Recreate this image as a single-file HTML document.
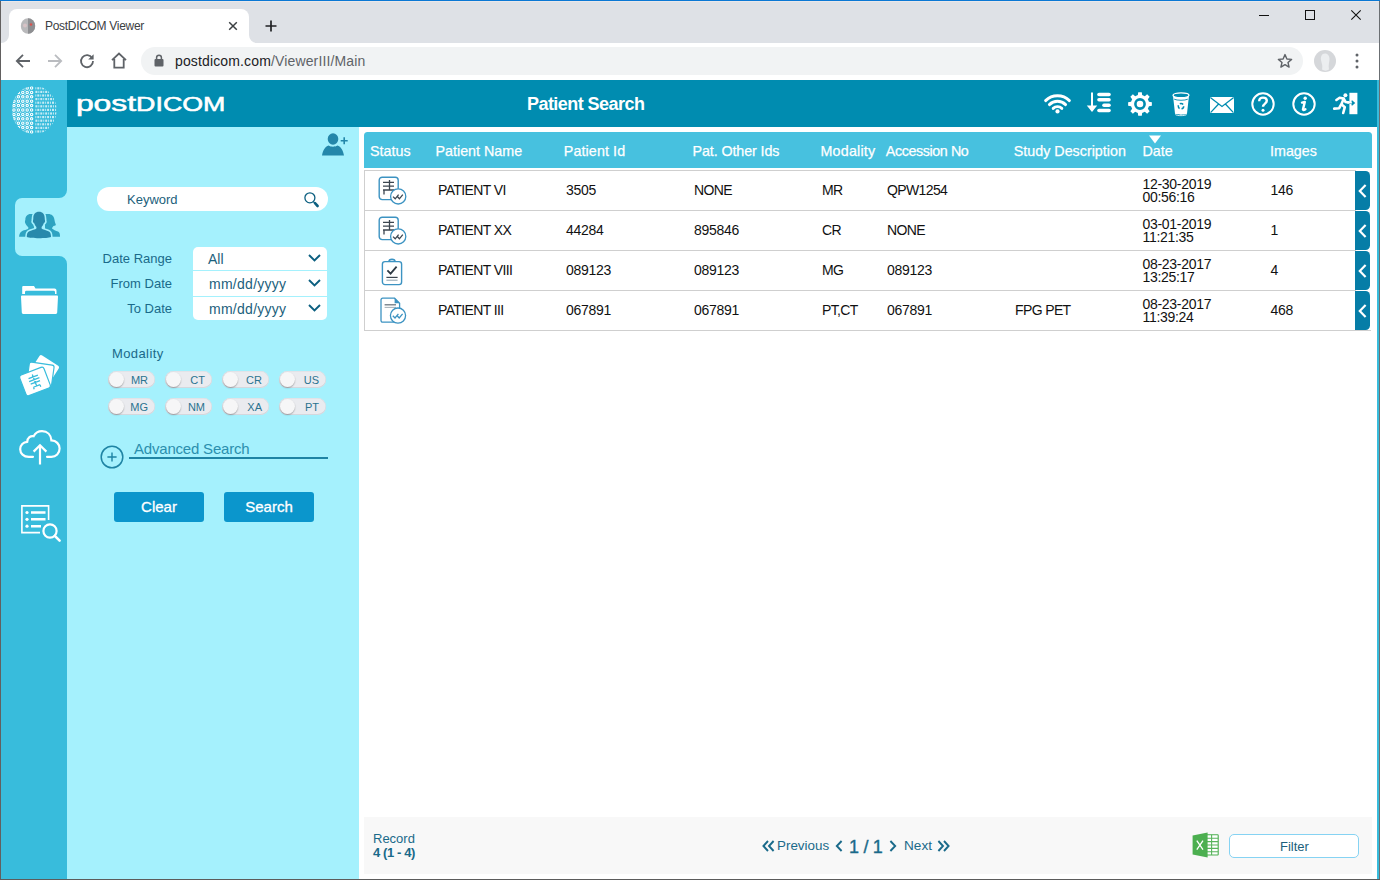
<!DOCTYPE html>
<html lang="en">
<head>
<meta charset="utf-8">
<title>PostDICOM Viewer</title>
<style>
html,body{margin:0;padding:0;}
body{width:1380px;height:880px;overflow:hidden;position:relative;background:#fff;font-family:"Liberation Sans",sans-serif;}
.a{position:absolute;}
.t{position:absolute;white-space:nowrap;line-height:1;}
svg{display:block;overflow:visible;}
/* browser chrome */
#tabbar{left:0;top:0;width:1380px;height:43px;background:#dee1e6;}
#topline{left:0;top:0;width:1380px;height:1px;background:#0a78d4;box-shadow:0 1px 0 #eae8ea;}
#tab{left:9px;top:9px;width:240px;height:34px;background:#fff;border-radius:8px 8px 0 0;}
#toolbar{left:0;top:43px;width:1380px;height:37px;background:#fff;}
#omni{left:141px;top:47px;width:1162px;height:28px;border-radius:14px;background:#f1f3f4;}
/* app */
#hdr{left:67px;top:80px;width:1310px;height:47px;background:#008cb0;}
#side{left:1px;top:80px;width:66px;height:799px;background:#38bcdc;}
#rstrip{left:1377px;top:80px;width:2px;height:799px;background:#38bcdc;}
#panel{left:67px;top:127px;width:292px;height:752px;background:#a5f1fd;}
#lborder{left:0;top:1px;width:1px;height:879px;background:#626060;}
#rborder{left:1379px;top:1px;width:1px;height:879px;background:#6b6f73;}
#bborder{left:0;top:879px;width:1380px;height:1px;background:#5c5c5c;}
.lbl{color:#1a6a8a;font-size:13px;}
.sel{left:193px;width:134px;height:24px;background:#fff;}
.tog{width:47px;height:17px;border-radius:8.5px;background:#eaebef;box-shadow:inset 0 -1px 0 0 #d4d7dd, inset 0 0 0 0.6px #d9dce2;}
.tog i{position:absolute;left:0.5px;top:0.5px;width:15px;height:15px;border-radius:8px;background:#f6f6f7;box-shadow:0 1px 1.5px rgba(0,0,0,.3);}
.tog b{position:absolute;right:7px;top:3.5px;font-weight:normal;font-size:11px;line-height:11px;color:#2a7390;}
.btn{width:90px;height:30px;border-radius:3px;background:#0b96cc;color:#fff;font-size:15px;text-align:center;line-height:30px;-webkit-text-stroke:0.3px #fff;}
/* table */
#thead{left:364px;top:132px;width:1008px;height:36px;background:#47c1df;border-radius:3.5px 3.5px 0 0;}
.th{color:#fff;font-size:14.3px;top:143.5px;-webkit-text-stroke:0.25px #fff;}
.row{left:364px;width:991px;height:39px;border-top:1px solid #cfcfcf;border-left:1px solid #cfcfcf;background:#fff;}
.rb{left:1355px;width:15px;height:38.5px;background:#067da7;border-radius:0 4.5px 4.5px 0;}
.td{color:#111;font-size:14px;letter-spacing:-0.3px;}
.cap{letter-spacing:-0.62px;}
#foot{left:364px;top:817px;width:1008px;height:57px;background:#f8f8f8;}
.pg{color:#1a6a8a;font-size:14px;}
</style>
</head>
<body>
<!-- BROWSER CHROME -->
<div class="a" id="tabbar"></div>
<div class="a" id="topline"></div>
<div class="a" id="tab"></div>
<div class="a" id="toolbar"></div>
<div class="a" id="omni"></div>
<!--CHROME-ICONS-START-->
<!-- tab flares -->
<svg class="a" style="left:1px;top:35px" width="8" height="8"><path d="M0 8 A8 8 0 0 0 8 0 V8Z" fill="#fff"/></svg>
<svg class="a" style="left:249px;top:35px" width="8" height="8"><path d="M8 8 A8 8 0 0 1 0 0 V8Z" fill="#fff"/></svg>
<!-- favicon -->
<svg class="a" style="left:20px;top:18px" width="16" height="16" viewBox="0 0 16 16"><ellipse cx="8" cy="8" rx="7.2" ry="7.8" fill="#b9b9bb"/><path d="M8 0.2 A7.2 7.8 0 0 1 8 15.8Z" fill="#8e8f92"/><circle cx="11" cy="6.5" r="1.3" fill="#d9534f"/><circle cx="5" cy="7.5" r="2" fill="#d7c3c6"/></svg>
<span class="t" id="tabtitle" style="left:45px;top:20px;font-size:12px;color:#3c4043;letter-spacing:-0.3px">PostDICOM Viewer</span>
<svg class="a" style="left:228px;top:21px" width="10" height="10" viewBox="0 0 10 10"><path d="M1.2 1.2 L8.8 8.8 M8.8 1.2 L1.2 8.8" stroke="#3c4043" stroke-width="1.5" fill="none"/></svg>
<svg class="a" style="left:265px;top:20px" width="12" height="12" viewBox="0 0 12 12"><path d="M6 0.5 V11.5 M0.5 6 H11.5" stroke="#202124" stroke-width="1.7" fill="none"/></svg>
<!-- window controls -->
<svg class="a" style="left:1259px;top:10px" width="10" height="10" viewBox="0 0 10 10"><path d="M0 5.5 H10" stroke="#111" stroke-width="1" fill="none"/></svg>
<svg class="a" style="left:1305px;top:10px" width="10" height="10" viewBox="0 0 10 10"><rect x="0.5" y="0.5" width="9" height="9" stroke="#111" stroke-width="1" fill="none"/></svg>
<svg class="a" style="left:1351px;top:10px" width="10" height="10" viewBox="0 0 10 10"><path d="M0.3 0.3 L9.7 9.7 M9.7 0.3 L0.3 9.7" stroke="#111" stroke-width="1.1" fill="none"/></svg>
<!-- nav icons -->
<svg class="a" style="left:15px;top:53px" width="16" height="16" viewBox="0 0 16 16"><path d="M15 8 H2.5 M8 1.8 L1.8 8 L8 14.2" stroke="#5f6368" stroke-width="1.8" fill="none"/></svg>
<svg class="a" style="left:47px;top:53px" width="16" height="16" viewBox="0 0 16 16"><path d="M1 8 H13.5 M8 1.8 L14.2 8 L8 14.2" stroke="#babcc0" stroke-width="1.8" fill="none"/></svg>
<svg class="a" style="left:79px;top:53px" width="16" height="16" viewBox="0 0 16 16"><path d="M13.2 5.2 A6 6 0 1 0 14 8" stroke="#5f6368" stroke-width="1.8" fill="none"/><path d="M14.6 1.2 V6.6 H9.2Z" fill="#5f6368"/></svg>
<svg class="a" style="left:111px;top:52px" width="16" height="17" viewBox="0 0 16 17"><path d="M1 8.2 L8 1.6 L15 8.2 M3.3 7 V15.6 H12.7 V7" stroke="#5f6368" stroke-width="1.8" fill="none" stroke-linejoin="miter"/></svg>
<!-- lock -->
<svg class="a" style="left:154px;top:54px" width="10" height="13" viewBox="0 0 10 13"><rect x="0.5" y="5" width="9" height="7.5" rx="1" fill="#5f6368"/><path d="M2.6 5.5 V3.6 A2.4 2.4 0 0 1 7.4 3.6 V5.5" stroke="#5f6368" stroke-width="1.5" fill="none"/></svg>
<span class="t" id="url" style="left:175px;top:54px;font-size:14px;color:#202124;letter-spacing:0.14px">postdicom.com<span style="color:#5f6368">/ViewerIII/Main</span></span>
<!-- star -->
<svg class="a" style="left:1277px;top:53px" width="16" height="16" viewBox="0 0 16 16"><path d="M8 1.6 L9.9 6 L14.6 6.4 L11 9.5 L12.1 14.1 L8 11.6 L3.9 14.1 L5 9.5 L1.4 6.4 L6.1 6Z" stroke="#5f6368" stroke-width="1.4" fill="none" stroke-linejoin="round"/></svg>
<!-- avatar -->
<svg class="a" style="left:1314px;top:50px" width="22" height="22" viewBox="0 0 22 22"><circle cx="11" cy="11" r="11" fill="#d5d7da"/><path d="M11 3.5 C7.5 3.5 6.5 7 7 10 C7.4 13 9 15 8 19.5 C10 21 13 21 15 19.5 C14 15 15.5 12 15.5 9 C15.5 6 14 3.5 11 3.5Z" fill="#eceef0"/></svg>
<svg class="a" style="left:1355px;top:53px" width="4" height="16" viewBox="0 0 4 16"><circle cx="2" cy="2" r="1.5" fill="#5f6368"/><circle cx="2" cy="8" r="1.5" fill="#5f6368"/><circle cx="2" cy="14" r="1.5" fill="#5f6368"/></svg>
<!--CHROME-ICONS-END-->

<!-- APP -->
<div class="a" id="side"></div>
<div class="a" id="hdr"></div>
<div class="a" id="rstrip"></div>
<div class="a" id="panel"></div>
<!--SIDEBAR-START-->
<svg class="a" style="left:12px;top:86px" width="45" height="48" viewBox="0 0 45 48"><defs><clipPath id="lgL"><path d="M22 0 A22.2 24 0 0 0 22 48Z"/></clipPath><clipPath id="lgR"><path d="M22.8 0 A21.8 24 0 0 1 22.8 48Z"/></clipPath></defs><g clip-path="url(#lgL)"><g fill="none" stroke="#fff" stroke-width="1.1"><circle cx="19.60" cy="2.00" r="1.2"/><circle cx="15.20" cy="2.00" r="1.2"/><circle cx="10.80" cy="2.00" r="1.2"/><circle cx="6.40" cy="2.00" r="1.2"/><circle cx="2.00" cy="2.00" r="1.2"/><circle cx="19.60" cy="6.40" r="1.2"/><circle cx="15.20" cy="6.40" r="1.2"/><circle cx="10.80" cy="6.40" r="1.2"/><circle cx="6.40" cy="6.40" r="1.2"/><circle cx="2.00" cy="6.40" r="1.2"/><circle cx="19.60" cy="10.80" r="1.2"/><circle cx="15.20" cy="10.80" r="1.2"/><circle cx="10.80" cy="10.80" r="1.2"/><circle cx="6.40" cy="10.80" r="1.2"/><circle cx="2.00" cy="10.80" r="1.2"/><circle cx="19.60" cy="15.20" r="1.2"/><circle cx="15.20" cy="15.20" r="1.2"/><circle cx="10.80" cy="15.20" r="1.2"/><circle cx="6.40" cy="15.20" r="1.2"/><circle cx="2.00" cy="15.20" r="1.2"/><circle cx="19.60" cy="19.60" r="1.2"/><circle cx="15.20" cy="19.60" r="1.2"/><circle cx="10.80" cy="19.60" r="1.2"/><circle cx="6.40" cy="19.60" r="1.2"/><circle cx="2.00" cy="19.60" r="1.2"/><circle cx="19.60" cy="24.00" r="1.2"/><circle cx="15.20" cy="24.00" r="1.2"/><circle cx="10.80" cy="24.00" r="1.2"/><circle cx="6.40" cy="24.00" r="1.2"/><circle cx="2.00" cy="24.00" r="1.2"/><circle cx="19.60" cy="28.40" r="1.2"/><circle cx="15.20" cy="28.40" r="1.2"/><circle cx="10.80" cy="28.40" r="1.2"/><circle cx="6.40" cy="28.40" r="1.2"/><circle cx="2.00" cy="28.40" r="1.2"/><circle cx="19.60" cy="32.80" r="1.2"/><circle cx="15.20" cy="32.80" r="1.2"/><circle cx="10.80" cy="32.80" r="1.2"/><circle cx="6.40" cy="32.80" r="1.2"/><circle cx="2.00" cy="32.80" r="1.2"/><circle cx="19.60" cy="37.20" r="1.2"/><circle cx="15.20" cy="37.20" r="1.2"/><circle cx="10.80" cy="37.20" r="1.2"/><circle cx="6.40" cy="37.20" r="1.2"/><circle cx="2.00" cy="37.20" r="1.2"/><circle cx="19.60" cy="41.60" r="1.2"/><circle cx="15.20" cy="41.60" r="1.2"/><circle cx="10.80" cy="41.60" r="1.2"/><circle cx="6.40" cy="41.60" r="1.2"/><circle cx="2.00" cy="41.60" r="1.2"/><circle cx="19.60" cy="46.00" r="1.2"/><circle cx="15.20" cy="46.00" r="1.2"/><circle cx="10.80" cy="46.00" r="1.2"/><circle cx="6.40" cy="46.00" r="1.2"/><circle cx="2.00" cy="46.00" r="1.2"/></g><g fill="#fff" opacity="0.7"><circle cx="17.40" cy="4.20" r="0.75"/><circle cx="13.00" cy="4.20" r="0.75"/><circle cx="8.60" cy="4.20" r="0.75"/><circle cx="4.20" cy="4.20" r="0.75"/><circle cx="-0.20" cy="4.20" r="0.75"/><circle cx="17.40" cy="8.60" r="0.75"/><circle cx="13.00" cy="8.60" r="0.75"/><circle cx="8.60" cy="8.60" r="0.75"/><circle cx="4.20" cy="8.60" r="0.75"/><circle cx="-0.20" cy="8.60" r="0.75"/><circle cx="17.40" cy="13.00" r="0.75"/><circle cx="13.00" cy="13.00" r="0.75"/><circle cx="8.60" cy="13.00" r="0.75"/><circle cx="4.20" cy="13.00" r="0.75"/><circle cx="-0.20" cy="13.00" r="0.75"/><circle cx="17.40" cy="17.40" r="0.75"/><circle cx="13.00" cy="17.40" r="0.75"/><circle cx="8.60" cy="17.40" r="0.75"/><circle cx="4.20" cy="17.40" r="0.75"/><circle cx="-0.20" cy="17.40" r="0.75"/><circle cx="17.40" cy="21.80" r="0.75"/><circle cx="13.00" cy="21.80" r="0.75"/><circle cx="8.60" cy="21.80" r="0.75"/><circle cx="4.20" cy="21.80" r="0.75"/><circle cx="-0.20" cy="21.80" r="0.75"/><circle cx="17.40" cy="26.20" r="0.75"/><circle cx="13.00" cy="26.20" r="0.75"/><circle cx="8.60" cy="26.20" r="0.75"/><circle cx="4.20" cy="26.20" r="0.75"/><circle cx="-0.20" cy="26.20" r="0.75"/><circle cx="17.40" cy="30.60" r="0.75"/><circle cx="13.00" cy="30.60" r="0.75"/><circle cx="8.60" cy="30.60" r="0.75"/><circle cx="4.20" cy="30.60" r="0.75"/><circle cx="-0.20" cy="30.60" r="0.75"/><circle cx="17.40" cy="35.00" r="0.75"/><circle cx="13.00" cy="35.00" r="0.75"/><circle cx="8.60" cy="35.00" r="0.75"/><circle cx="4.20" cy="35.00" r="0.75"/><circle cx="-0.20" cy="35.00" r="0.75"/><circle cx="17.40" cy="39.40" r="0.75"/><circle cx="13.00" cy="39.40" r="0.75"/><circle cx="8.60" cy="39.40" r="0.75"/><circle cx="4.20" cy="39.40" r="0.75"/><circle cx="-0.20" cy="39.40" r="0.75"/><circle cx="17.40" cy="43.80" r="0.75"/><circle cx="13.00" cy="43.80" r="0.75"/><circle cx="8.60" cy="43.80" r="0.75"/><circle cx="4.20" cy="43.80" r="0.75"/><circle cx="-0.20" cy="43.80" r="0.75"/><circle cx="17.40" cy="48.20" r="0.75"/><circle cx="13.00" cy="48.20" r="0.75"/><circle cx="8.60" cy="48.20" r="0.75"/><circle cx="4.20" cy="48.20" r="0.75"/><circle cx="-0.20" cy="48.20" r="0.75"/></g></g><g clip-path="url(#lgR)" fill="#fff" opacity="0.72"><rect x="23.40" y="1.20" width="0.90" height="2.2"/><rect x="25.30" y="1.20" width="2.00" height="2.2"/><rect x="28.30" y="1.20" width="0.90" height="2.2"/><rect x="30.20" y="1.20" width="2.00" height="2.2"/><rect x="33.20" y="1.20" width="0.90" height="2.2"/><rect x="35.10" y="1.20" width="2.00" height="2.2"/><rect x="38.10" y="1.20" width="0.90" height="2.2"/><rect x="40.00" y="1.20" width="2.00" height="2.2"/><rect x="43.00" y="1.20" width="0.90" height="2.2"/><rect x="44.90" y="1.20" width="2.00" height="2.2"/><rect x="23.40" y="4.80" width="2.00" height="2.2"/><rect x="26.40" y="4.80" width="0.90" height="2.2"/><rect x="28.30" y="4.80" width="2.00" height="2.2"/><rect x="31.30" y="4.80" width="0.90" height="2.2"/><rect x="33.20" y="4.80" width="2.00" height="2.2"/><rect x="36.20" y="4.80" width="0.90" height="2.2"/><rect x="38.10" y="4.80" width="2.00" height="2.2"/><rect x="41.10" y="4.80" width="0.90" height="2.2"/><rect x="43.00" y="4.80" width="2.00" height="2.2"/><rect x="46.00" y="4.80" width="0.90" height="2.2"/><rect x="23.40" y="8.40" width="0.90" height="2.2"/><rect x="25.30" y="8.40" width="2.00" height="2.2"/><rect x="28.30" y="8.40" width="0.90" height="2.2"/><rect x="30.20" y="8.40" width="2.00" height="2.2"/><rect x="33.20" y="8.40" width="0.90" height="2.2"/><rect x="35.10" y="8.40" width="2.00" height="2.2"/><rect x="38.10" y="8.40" width="0.90" height="2.2"/><rect x="40.00" y="8.40" width="2.00" height="2.2"/><rect x="43.00" y="8.40" width="0.90" height="2.2"/><rect x="44.90" y="8.40" width="2.00" height="2.2"/><rect x="23.40" y="12.00" width="2.00" height="2.2"/><rect x="26.40" y="12.00" width="0.90" height="2.2"/><rect x="28.30" y="12.00" width="2.00" height="2.2"/><rect x="31.30" y="12.00" width="0.90" height="2.2"/><rect x="33.20" y="12.00" width="2.00" height="2.2"/><rect x="36.20" y="12.00" width="0.90" height="2.2"/><rect x="38.10" y="12.00" width="2.00" height="2.2"/><rect x="41.10" y="12.00" width="0.90" height="2.2"/><rect x="43.00" y="12.00" width="2.00" height="2.2"/><rect x="46.00" y="12.00" width="0.90" height="2.2"/><rect x="23.40" y="15.60" width="0.90" height="2.2"/><rect x="25.30" y="15.60" width="2.00" height="2.2"/><rect x="28.30" y="15.60" width="0.90" height="2.2"/><rect x="30.20" y="15.60" width="2.00" height="2.2"/><rect x="33.20" y="15.60" width="0.90" height="2.2"/><rect x="35.10" y="15.60" width="2.00" height="2.2"/><rect x="38.10" y="15.60" width="0.90" height="2.2"/><rect x="40.00" y="15.60" width="2.00" height="2.2"/><rect x="43.00" y="15.60" width="0.90" height="2.2"/><rect x="44.90" y="15.60" width="2.00" height="2.2"/><rect x="23.40" y="19.20" width="2.00" height="2.2"/><rect x="26.40" y="19.20" width="0.90" height="2.2"/><rect x="28.30" y="19.20" width="2.00" height="2.2"/><rect x="31.30" y="19.20" width="0.90" height="2.2"/><rect x="33.20" y="19.20" width="2.00" height="2.2"/><rect x="36.20" y="19.20" width="0.90" height="2.2"/><rect x="38.10" y="19.20" width="2.00" height="2.2"/><rect x="41.10" y="19.20" width="0.90" height="2.2"/><rect x="43.00" y="19.20" width="2.00" height="2.2"/><rect x="46.00" y="19.20" width="0.90" height="2.2"/><rect x="23.40" y="22.80" width="0.90" height="2.2"/><rect x="25.30" y="22.80" width="2.00" height="2.2"/><rect x="28.30" y="22.80" width="0.90" height="2.2"/><rect x="30.20" y="22.80" width="2.00" height="2.2"/><rect x="33.20" y="22.80" width="0.90" height="2.2"/><rect x="35.10" y="22.80" width="2.00" height="2.2"/><rect x="38.10" y="22.80" width="0.90" height="2.2"/><rect x="40.00" y="22.80" width="2.00" height="2.2"/><rect x="43.00" y="22.80" width="0.90" height="2.2"/><rect x="44.90" y="22.80" width="2.00" height="2.2"/><rect x="23.40" y="26.40" width="2.00" height="2.2"/><rect x="26.40" y="26.40" width="0.90" height="2.2"/><rect x="28.30" y="26.40" width="2.00" height="2.2"/><rect x="31.30" y="26.40" width="0.90" height="2.2"/><rect x="33.20" y="26.40" width="2.00" height="2.2"/><rect x="36.20" y="26.40" width="0.90" height="2.2"/><rect x="38.10" y="26.40" width="2.00" height="2.2"/><rect x="41.10" y="26.40" width="0.90" height="2.2"/><rect x="43.00" y="26.40" width="2.00" height="2.2"/><rect x="46.00" y="26.40" width="0.90" height="2.2"/><rect x="23.40" y="30.00" width="0.90" height="2.2"/><rect x="25.30" y="30.00" width="2.00" height="2.2"/><rect x="28.30" y="30.00" width="0.90" height="2.2"/><rect x="30.20" y="30.00" width="2.00" height="2.2"/><rect x="33.20" y="30.00" width="0.90" height="2.2"/><rect x="35.10" y="30.00" width="2.00" height="2.2"/><rect x="38.10" y="30.00" width="0.90" height="2.2"/><rect x="40.00" y="30.00" width="2.00" height="2.2"/><rect x="43.00" y="30.00" width="0.90" height="2.2"/><rect x="44.90" y="30.00" width="2.00" height="2.2"/><rect x="23.40" y="33.60" width="2.00" height="2.2"/><rect x="26.40" y="33.60" width="0.90" height="2.2"/><rect x="28.30" y="33.60" width="2.00" height="2.2"/><rect x="31.30" y="33.60" width="0.90" height="2.2"/><rect x="33.20" y="33.60" width="2.00" height="2.2"/><rect x="36.20" y="33.60" width="0.90" height="2.2"/><rect x="38.10" y="33.60" width="2.00" height="2.2"/><rect x="41.10" y="33.60" width="0.90" height="2.2"/><rect x="43.00" y="33.60" width="2.00" height="2.2"/><rect x="46.00" y="33.60" width="0.90" height="2.2"/><rect x="23.40" y="37.20" width="0.90" height="2.2"/><rect x="25.30" y="37.20" width="2.00" height="2.2"/><rect x="28.30" y="37.20" width="0.90" height="2.2"/><rect x="30.20" y="37.20" width="2.00" height="2.2"/><rect x="33.20" y="37.20" width="0.90" height="2.2"/><rect x="35.10" y="37.20" width="2.00" height="2.2"/><rect x="38.10" y="37.20" width="0.90" height="2.2"/><rect x="40.00" y="37.20" width="2.00" height="2.2"/><rect x="43.00" y="37.20" width="0.90" height="2.2"/><rect x="44.90" y="37.20" width="2.00" height="2.2"/><rect x="23.40" y="40.80" width="2.00" height="2.2"/><rect x="26.40" y="40.80" width="0.90" height="2.2"/><rect x="28.30" y="40.80" width="2.00" height="2.2"/><rect x="31.30" y="40.80" width="0.90" height="2.2"/><rect x="33.20" y="40.80" width="2.00" height="2.2"/><rect x="36.20" y="40.80" width="0.90" height="2.2"/><rect x="38.10" y="40.80" width="2.00" height="2.2"/><rect x="41.10" y="40.80" width="0.90" height="2.2"/><rect x="43.00" y="40.80" width="2.00" height="2.2"/><rect x="46.00" y="40.80" width="0.90" height="2.2"/><rect x="23.40" y="44.40" width="0.90" height="2.2"/><rect x="25.30" y="44.40" width="2.00" height="2.2"/><rect x="28.30" y="44.40" width="0.90" height="2.2"/><rect x="30.20" y="44.40" width="2.00" height="2.2"/><rect x="33.20" y="44.40" width="0.90" height="2.2"/><rect x="35.10" y="44.40" width="2.00" height="2.2"/><rect x="38.10" y="44.40" width="0.90" height="2.2"/><rect x="40.00" y="44.40" width="2.00" height="2.2"/><rect x="43.00" y="44.40" width="0.90" height="2.2"/><rect x="44.90" y="44.40" width="2.00" height="2.2"/></g></svg>
<!-- active tab -->
<div class="a" style="left:15px;top:198px;width:53px;height:58px;background:#a5f1fd;border-radius:7px 0 0 7px"></div>
<svg class="a" style="left:59px;top:190px" width="8" height="8"><path d="M8 0 V8 H0 A8 8 0 0 0 8 0Z" fill="#a5f1fd"/></svg>
<svg class="a" style="left:59px;top:256px" width="8" height="8"><path d="M8 8 V0 H0 A8 8 0 0 1 8 8Z" fill="#a5f1fd"/></svg>
<!-- people -->
<svg class="a" style="left:19px;top:212px" width="41" height="27" viewBox="0 0 41 27">
<g fill="#2ea3c1"><path d="M12.5 2 C8.6 1.6 6.2 4.2 6.4 7.6 C6.2 8.6 5.6 9.8 6.2 11 C6.8 12.6 8.4 14.4 9.4 15.6 C9.6 16.6 9 17.2 7.6 17.6 C4 18.6 0.4 19.4 0.1 24.8 H15 V2Z"/><path d="M26 2 H28 C32 1.4 35 3.6 35.4 7.4 C35.6 9.4 36.2 11 36.8 12.6 C37 13.6 36 13.8 35 13.8 C34 14.6 33.2 15.4 33 16.4 C34 17.6 37 18.6 39 19.6 C40.6 20.4 41 22 41 24.8 H26Z"/></g>
<path d="M20 -0.2 C16.4 -0.2 14.2 2.4 14.3 6 C14.3 7 14.2 7.6 14 8.4 C13.6 9.6 14.6 11 15.4 11.6 C15.8 13.2 16.6 14.4 17.4 15 V16.6 C16.4 17.6 13 18.2 10.4 19.2 C8.4 20 7.8 22 7.8 25 C12 26.6 28 26.6 32 25 C32 22 31.4 20 29.4 19.2 C26.8 18.2 23.6 17.6 22.6 16.6 V15 C23.4 14.4 24.2 13.2 24.6 11.6 C25.4 11 26.4 9.6 26 8.4 C25.8 7.6 25.7 7 25.7 6 C25.8 2.4 23.6 -0.2 20 -0.2Z" fill="#2889ab" stroke="#a5f1fd" stroke-width="3.2" paint-order="stroke"/>
</svg>
<!-- folder -->
<svg class="a" style="left:21px;top:286px" width="37" height="28" viewBox="0 0 37 28"><path d="M2.2 0 H13 L14.5 2.6 H33.5 A2 2 0 0 1 35.5 4.6 V8 H34 V6.2 A1.4 1.4 0 0 0 32.6 4.8 H5.4 A1.4 1.4 0 0 0 4 6.2 V8 H1.2 V1 A1 1 0 0 1 2.2 0Z" fill="#fff"/><path d="M1 9.6 H36 A1 1 0 0 1 37 10.7 L36.2 26.6 A1.4 1.4 0 0 1 34.8 28 H2.2 A1.4 1.4 0 0 1 0.8 26.6 L0 10.7 A1 1 0 0 1 1 9.6Z" fill="#fff"/></svg>
<!-- cards -->
<svg class="a" style="left:19px;top:354px" width="41" height="43" viewBox="0 0 41 43">
<g transform="translate(26,14.6) rotate(33)"><rect x="-11.5" y="-9.5" width="23" height="19" rx="2" fill="#fff"/></g>
<g transform="translate(21.5,20) rotate(8)"><rect x="-12.5" y="-10.5" width="25" height="21" rx="2.2" fill="#fff" stroke="#38bcdc" stroke-width="1.2"/></g>
<g transform="translate(16,27.5) rotate(-21)"><rect x="-13" y="-11" width="26" height="22" rx="2.4" fill="#fff" stroke="#38bcdc" stroke-width="1.2"/>
<path d="M0 -7.5 V5 M-5 -5 H5 M-5.5 -2 H5.5 M-5 1 H5 M-3.5 4.8 H3.5 M-3.5 4.8 V7 M3.5 4.8 V7" stroke="#38bcdc" stroke-width="1.3" fill="none"/></g>
</svg>
<!-- cloud -->
<svg class="a" style="left:19px;top:430px" width="42" height="36" viewBox="0 0 42 36"><path d="M14 26.8 H9.8 C4.6 26.8 1.2 23.4 1.2 19.2 C1.2 15 4.4 12 8.2 11.8 C8.6 7.6 11.6 5.6 14.6 6.2 C16.4 2.8 19.6 1.2 23 1.2 C28.4 1.2 32 5 32.4 10.4 C37.2 10.6 40.6 14 40.6 18.6 C40.6 23.4 37 26.8 32.4 26.8 H28" fill="none" stroke="#fff" stroke-width="2.2" stroke-linecap="round"/><path d="M21 34.5 V16 M14.6 21.6 L21 15.2 L27.4 21.6" fill="none" stroke="#fff" stroke-width="2.2"/></svg>
<!-- list search -->
<svg class="a" style="left:21px;top:505px" width="40" height="37" viewBox="0 0 40 37"><path d="M19 27.6 H0.9 V0.9 H27.6 V15" fill="none" stroke="#fff" stroke-width="1.6"/><circle cx="6" cy="7.5" r="1.6" fill="#fff"/><circle cx="6" cy="14.3" r="1.6" fill="#fff"/><circle cx="6" cy="21.2" r="1.6" fill="#fff"/><path d="M10 7.5 H24.5 M10 14.3 H24.5 M10 21.2 H20" stroke="#fff" stroke-width="2.6" fill="none"/><circle cx="29" cy="26" r="6.6" fill="none" stroke="#fff" stroke-width="2.2"/><path d="M33.8 30.8 L38.6 35.6" stroke="#fff" stroke-width="2.6" stroke-linecap="round"/></svg>
<!--SIDEBAR-END-->
<!--HEADER-START-->

<svg class="a" style="left:70px;top:90px" width="165" height="32" viewBox="0 0 165 32"><g font-family="'Liberation Sans',sans-serif" fill="#fff" stroke="#fff" stroke-width="0.55"><text id="brand" x="5.9" y="21" font-size="21.6" textLength="60.3" lengthAdjust="spacingAndGlyphs">post</text><text id="brand2" x="66.1" y="21" font-size="19.6" textLength="89.3" lengthAdjust="spacingAndGlyphs">DICOM</text></g></svg>
<span class="t" id="title" style="left:527px;top:95px;font-size:18px;font-weight:bold;color:#fff;letter-spacing:-0.55px">Patient Search</span>
<!-- wifi -->
<svg class="a" style="left:1044px;top:93px" width="27" height="21" viewBox="0 0 27 21"><g fill="none" stroke="#fff" stroke-width="2.9" stroke-linecap="round"><path d="M1.6 7.6 A17 17 0 0 1 25.4 7.6"/><path d="M5.4 11.6 A11.6 11.6 0 0 1 21.6 11.6"/><path d="M9.2 15.4 A6.2 6.2 0 0 1 17.8 15.4"/></g><circle cx="13.5" cy="18.4" r="2.1" fill="#fff"/></svg>
<!-- sort -->
<svg class="a" style="left:1086px;top:92px" width="26" height="21" viewBox="0 0 26 21"><path d="M6 0.4 V15" stroke="#fff" stroke-width="2" fill="none"/><path d="M0.8 13.4 H11.2 L6 20Z" fill="#fff"/><g stroke="#fff" stroke-width="3.6" stroke-linecap="round" fill="none"><path d="M13 2.5 H23"/><path d="M13 7.8 H23"/><path d="M18 13.2 H23"/><path d="M13 18.5 H23"/></g></svg>
<!-- gear -->
<svg class="a" style="left:1128px;top:92px" width="24" height="24" viewBox="0 0 24 24"><path d="M9.85 3.05 L10.22 0.13 L13.78 0.13 L14.15 3.05 L16.81 4.16 L19.13 2.35 L21.65 4.87 L19.84 7.19 L20.95 9.85 L23.87 10.22 L23.87 13.78 L20.95 14.15 L19.84 16.81 L21.65 19.13 L19.13 21.65 L16.81 19.84 L14.15 20.95 L13.78 23.87 L10.22 23.87 L9.85 20.95 L7.19 19.84 L4.87 21.65 L2.35 19.13 L4.16 16.81 L3.05 14.15 L0.13 13.78 L0.13 10.22 L3.05 9.85 L4.16 7.19 L2.35 4.87 L4.87 2.35 L7.19 4.16Z" fill="#fff"/><circle cx="12" cy="12" r="4.6" fill="none" stroke="#008cb0" stroke-width="2.6"/></svg>
<!-- trash -->
<svg class="a" style="left:1172px;top:92px" width="18" height="24" viewBox="0 0 18 24"><path d="M1 3.4 L3 21.6 C3 23 15 23 15 21.6 L17 3.4Z" fill="#fff"/><ellipse cx="9" cy="3.2" rx="8" ry="2.4" fill="#008cb0" stroke="#fff" stroke-width="1.3"/><path d="M2.2 7.2 C5 8.6 13 8.6 15.8 7.2" stroke="#008cb0" stroke-width="0.9" fill="none"/><circle cx="9" cy="14.2" r="2.7" fill="none" stroke="#008cb0" stroke-width="1.5" stroke-dasharray="3.6 2"/><path d="M3.4 22.6 C5 24 13 24 14.6 22.6" stroke="#fff" stroke-width="0.8" fill="none"/></svg>
<!-- mail -->
<svg class="a" style="left:1210px;top:97px" width="24" height="16" viewBox="0 0 24 16"><rect x="0" y="0" width="24" height="16" rx="1.6" fill="#fff"/><path d="M0.6 0.8 L12 9.4 L23.4 0.8 M0.8 15.4 L8.6 7 M23.2 15.4 L15.4 7" stroke="#008cb0" stroke-width="1.3" fill="none"/></svg>
<!-- help -->
<svg class="a" style="left:1251px;top:92px" width="24" height="24" viewBox="0 0 24 24"><circle cx="12" cy="12" r="10.7" fill="none" stroke="#fff" stroke-width="2"/><path d="M8.2 9.2 C8.2 6.6 10 5.6 12 5.6 C14.2 5.6 15.8 6.8 15.8 8.8 C15.8 11.6 12 11.6 12 14.8" stroke="#fff" stroke-width="2.4" fill="none"/><circle cx="12" cy="18.2" r="1.5" fill="#fff"/></svg>
<!-- info -->
<svg class="a" style="left:1292px;top:92px" width="24" height="24" viewBox="0 0 24 24"><circle cx="12" cy="12" r="10.7" fill="none" stroke="#fff" stroke-width="2"/><circle cx="13.2" cy="6.3" r="1.7" fill="#fff"/><path d="M10 10.6 L12.8 10 L11 17.2 C10.8 18.2 11.6 18.4 13.4 17.2" stroke="#fff" stroke-width="2.4" fill="none" stroke-linecap="round" stroke-linejoin="round"/></svg>
<!-- exit -->
<svg class="a" style="left:1333px;top:92px" width="25" height="23" viewBox="0 0 25 23"><rect x="16.4" y="0.8" width="8" height="21.4" fill="#fff"/><path d="M14.5 11 H20.5 M18.6 8.8 L21.2 11 L18.6 13.2" stroke="#008cb0" stroke-width="1.4" fill="none"/><path d="M14 10.6 H18.8" stroke="#fff" stroke-width="1.6" fill="none"/><circle cx="12.4" cy="3.2" r="2" fill="#fff"/><g stroke="#fff" stroke-width="2.6" fill="none" stroke-linecap="round" stroke-linejoin="round"><path d="M3.4 8 L6.6 5.8 L10.8 6.6 L8.4 12.2 L11.8 15.2 L10.2 21"/><path d="M10.8 6.8 L12.6 10 L15.6 10.4"/><path d="M7.8 13 L6.2 16.2 L1.2 16.6"/></g></svg>
<!--HEADER-END-->
<!--PANEL-START-->

<!-- user plus -->
<svg class="a" style="left:322px;top:133px" width="27" height="23" viewBox="0 0 27 23"><ellipse cx="11" cy="6" rx="5.3" ry="5.8" fill="#2487aa"/><path d="M0 22.4 C1 17 3 14 6.6 12.6 C9 14.2 13 14.2 15.4 12.6 C19 14 21 17 22 22.4Z" fill="#2487aa"/><path d="M22.2 4.2 V11.2 M18.7 7.7 H25.7" stroke="#2487aa" stroke-width="1.6" fill="none"/></svg>
<!-- keyword -->
<div class="a" style="left:97px;top:187px;width:231px;height:24px;border-radius:12px;background:#fff"></div>
<span class="t lbl" id="kw" style="left:127px;top:193px;color:#1c5f7c">Keyword</span>
<svg class="a" style="left:303px;top:191px" width="16" height="17" viewBox="0 0 16 17"><circle cx="6.9" cy="6.8" r="5" fill="none" stroke="#0c5f80" stroke-width="1.3"/><path d="M10.4 10.6 L12 12.4" stroke="#0c5f80" stroke-width="1.3"/><path d="M12 12.2 L14.6 15" stroke="#0c5f80" stroke-width="2.6" stroke-linecap="round"/></svg>
<!-- date -->
<span class="t lbl" id="l1" style="right:1208px;top:252px">Date Range</span>
<span class="t lbl" id="l2" style="right:1208px;top:277px">From Date</span>
<span class="t lbl" id="l3" style="right:1208px;top:302px">To Date</span>
<div class="a sel" style="top:247px;height:23px;border-radius:5px 5px 0 0"></div>
<div class="a sel" style="top:271px;height:25px"></div>
<div class="a sel" style="top:297px;height:23px;border-radius:0 0 5px 5px"></div>
<span class="t" id="s1" style="left:208px;top:252px;font-size:14px;color:#1c5f7c">All</span>
<span class="t" id="s2" style="left:209px;top:277px;font-size:14px;color:#1c5f7c;letter-spacing:0.27px">mm/dd/yyyy</span>
<span class="t" id="s3" style="left:209px;top:302px;font-size:14px;color:#1c5f7c;letter-spacing:0.27px">mm/dd/yyyy</span>
<svg class="a" style="left:308px;top:254px" width="13" height="8" viewBox="0 0 13 8"><path d="M1 1 L6.5 6.5 L12 1" stroke="#0c5f80" stroke-width="1.9" fill="none"/></svg><svg class="a" style="left:308px;top:279px" width="13" height="8" viewBox="0 0 13 8"><path d="M1 1 L6.5 6.5 L12 1" stroke="#0c5f80" stroke-width="1.9" fill="none"/></svg><svg class="a" style="left:308px;top:304px" width="13" height="8" viewBox="0 0 13 8"><path d="M1 1 L6.5 6.5 L12 1" stroke="#0c5f80" stroke-width="1.9" fill="none"/></svg>
<span class="t lbl" id="mod" style="left:112px;top:347px;letter-spacing:0.4px">Modality</span>
<div class="a tog" style="left:108px;top:371px"><i></i><b>MR</b></div>
<div class="a tog" style="left:165px;top:371px"><i></i><b>CT</b></div>
<div class="a tog" style="left:222px;top:371px"><i></i><b>CR</b></div>
<div class="a tog" style="left:279px;top:371px"><i></i><b>US</b></div>
<div class="a tog" style="left:108px;top:398px"><i></i><b>MG</b></div>
<div class="a tog" style="left:165px;top:398px"><i></i><b>NM</b></div>
<div class="a tog" style="left:222px;top:398px"><i></i><b>XA</b></div>
<div class="a tog" style="left:279px;top:398px"><i></i><b>PT</b></div>
<!-- advanced -->
<svg class="a" style="left:100px;top:445px" width="24" height="24" viewBox="0 0 24 24"><circle cx="12" cy="12" r="10.8" fill="none" stroke="#1f84a4" stroke-width="1.5"/><path d="M12 7.4 V16.6 M7.4 12 H16.6" stroke="#1f84a4" stroke-width="1.4" fill="none"/></svg>
<span class="t" id="adv" style="left:134px;top:441px;font-size:15px;color:#2b8fae;letter-spacing:-0.2px">Advanced Search</span>
<div class="a" style="left:129px;top:456.5px;width:199px;height:2px;background:#1f84a4"></div>
<div class="a btn" id="bclear" style="left:114px;top:492px">Clear</div>
<div class="a btn" id="bsearch" style="left:224px;top:492px">Search</div>
<!--PANEL-END-->
<!--TABLE-START-->
<div class="a" id="thead"></div>
<span class="t th" id="h0" style="left:370.0px">Status</span>
<span class="t th" id="h1" style="left:435.5px">Patient Name</span>
<span class="t th" id="h2" style="letter-spacing:0.1px;left:563.8px">Patient Id</span>
<span class="t th" id="h3" style="letter-spacing:-0.1px;left:692.5px">Pat. Other Ids</span>
<span class="t th" id="h4" style="letter-spacing:0.2px;left:820.5px">Modality</span>
<span class="t th" id="h5" style="letter-spacing:-0.4px;left:885.8px">Accession No</span>
<span class="t th" id="h6" style="left:1013.8px">Study Description</span>
<span class="t th" id="h7" style="left:1142.5px">Date</span>
<span class="t th" id="h8" style="left:1270.0px">Images</span>
<svg class="a" style="left:1149px;top:135px" width="12" height="9" viewBox="0 0 12 9"><path d="M0 0.4 H12 L6 8.6Z" fill="#fff"/></svg>
<div class="a row" style="top:170px"></div>
<div class="a rb" style="top:171px"></div>
<svg class="a" style="left:1358px;top:184px" width="9" height="14" viewBox="0 0 9 14"><path d="M7.6 1 L1.8 7 L7.6 13" stroke="#fff" stroke-width="2.2" fill="none"/></svg>
<svg class="a" style="left:378px;top:176px" width="30" height="29" viewBox="0 0 30 29"><rect x="1.2" y="1.2" width="19" height="22.4" rx="3" fill="#fff" stroke="#3c93c2" stroke-width="1.4"/><path d="M5 6.4 H16 M5 10.2 H16 M5 14 H16 M11.5 4 V14 M6 14 V18.4" stroke="#3c4650" stroke-width="1.3" fill="none"/><circle cx="20.2" cy="20.4" r="7.6" fill="#fff" stroke="#3c93c2" stroke-width="1.3"/><path d="M15 20.6 L17.2 22.8 L20.6 18.6 M19.6 20.8 L21.4 22.8 L24.8 18.6" stroke="#3c4650" stroke-width="1.3" fill="none"/></svg>
<span class="t td cap" id="r0c0" style="left:438px;top:183px">PATIENT VI</span>
<span class="t td" id="r0c1" style="left:566px;top:183px">3505</span>
<span class="t td cap" id="r0c2" style="left:694px;top:183px">NONE</span>
<span class="t td cap" id="r0c3" style="left:822px;top:183px">MR</span>
<span class="t td cap" id="r0c4" style="left:887px;top:183px">QPW1254</span>
<span class="t td" id="r0d1" style="left:1142.5px;top:177px">12-30-2019</span>
<span class="t td" id="r0d2" style="left:1142.5px;top:190px">00:56:16</span>
<span class="t td" id="r0im" style="left:1270.5px;top:183px">146</span>
<div class="a row" style="top:210px"></div>
<div class="a rb" style="top:211px"></div>
<svg class="a" style="left:1358px;top:224px" width="9" height="14" viewBox="0 0 9 14"><path d="M7.6 1 L1.8 7 L7.6 13" stroke="#fff" stroke-width="2.2" fill="none"/></svg>
<svg class="a" style="left:378px;top:216px" width="30" height="29" viewBox="0 0 30 29"><rect x="1.2" y="1.2" width="19" height="22.4" rx="3" fill="#fff" stroke="#3c93c2" stroke-width="1.4"/><path d="M5 6.4 H16 M5 10.2 H16 M5 14 H16 M11.5 4 V14 M6 14 V18.4" stroke="#3c4650" stroke-width="1.3" fill="none"/><circle cx="20.2" cy="20.4" r="7.6" fill="#fff" stroke="#3c93c2" stroke-width="1.3"/><path d="M15 20.6 L17.2 22.8 L20.6 18.6 M19.6 20.8 L21.4 22.8 L24.8 18.6" stroke="#3c4650" stroke-width="1.3" fill="none"/></svg>
<span class="t td cap" id="r1c0" style="left:438px;top:223px">PATIENT XX</span>
<span class="t td" id="r1c1" style="left:566px;top:223px">44284</span>
<span class="t td" id="r1c2" style="left:694px;top:223px">895846</span>
<span class="t td cap" id="r1c3" style="left:822px;top:223px">CR</span>
<span class="t td cap" id="r1c4" style="left:887px;top:223px">NONE</span>
<span class="t td" id="r1d1" style="left:1142.5px;top:217px">03-01-2019</span>
<span class="t td" id="r1d2" style="left:1142.5px;top:230px">11:21:35</span>
<span class="t td" id="r1im" style="left:1270.5px;top:223px">1</span>
<div class="a row" style="top:250px"></div>
<div class="a rb" style="top:251px"></div>
<svg class="a" style="left:1358px;top:264px" width="9" height="14" viewBox="0 0 9 14"><path d="M7.6 1 L1.8 7 L7.6 13" stroke="#fff" stroke-width="2.2" fill="none"/></svg>
<svg class="a" style="left:381px;top:257.6px" width="22" height="28" viewBox="0 0 22 28"><path d="M8 3.6 C8 0.6 14 0.6 14 3.6" fill="none" stroke="#3c93c2" stroke-width="1.6"/><rect x="1.4" y="3.6" width="19.2" height="23" rx="2.6" fill="#fff" stroke="#3c93c2" stroke-width="1.4"/><path d="M6.4 12.4 L9.6 15.6 L15.6 8.6" stroke="#2f3a44" stroke-width="1.8" fill="none"/><path d="M5.4 19.4 H16.6" stroke="#3c4650" stroke-width="1.2"/><path d="M5.4 22.2 H16.6" stroke="#8aa0ad" stroke-width="1"/></svg>
<span class="t td cap" id="r2c0" style="left:438px;top:263px">PATIENT VIII</span>
<span class="t td" id="r2c1" style="left:566px;top:263px">089123</span>
<span class="t td" id="r2c2" style="left:694px;top:263px">089123</span>
<span class="t td cap" id="r2c3" style="left:822px;top:263px">MG</span>
<span class="t td" id="r2c4" style="left:887px;top:263px">089123</span>
<span class="t td" id="r2d1" style="left:1142.5px;top:257px">08-23-2017</span>
<span class="t td" id="r2d2" style="left:1142.5px;top:270px">13:25:17</span>
<span class="t td" id="r2im" style="left:1270.5px;top:263px">4</span>
<div class="a row" style="top:290px"></div>
<div class="a rb" style="top:291px"></div>
<svg class="a" style="left:1358px;top:304px" width="9" height="14" viewBox="0 0 9 14"><path d="M7.6 1 L1.8 7 L7.6 13" stroke="#fff" stroke-width="2.2" fill="none"/></svg>
<svg class="a" style="left:380px;top:297px" width="30" height="29" viewBox="0 0 30 29"><path d="M2.6 1.2 H14.6 L19.6 6.2 V23.6 A1.6 1.6 0 0 1 18 25.2 H2.6 A1.6 1.6 0 0 1 1 23.6 V2.8 A1.6 1.6 0 0 1 2.6 1.2Z" fill="#fff" stroke="#3c93c2" stroke-width="1.3"/><path d="M14.6 1.2 V6.2 H19.6Z" fill="#3c93c2"/><path d="M4.6 7.8 H16" stroke="#6b7780" stroke-width="1.3"/><path d="M4.6 10.4 H16" stroke="#aab4bb" stroke-width="1.1"/><circle cx="18" cy="18.6" r="7.6" fill="#fff" stroke="#3c93c2" stroke-width="1.3"/><path d="M12.8 18.8 L15 21 L18.4 16.8 M17.4 19 L19.2 21 L22.6 16.8" stroke="#3c93c2" stroke-width="1.3" fill="none"/></svg>
<span class="t td cap" id="r3c0" style="left:438px;top:303px">PATIENT III</span>
<span class="t td" id="r3c1" style="left:566px;top:303px">067891</span>
<span class="t td" id="r3c2" style="left:694px;top:303px">067891</span>
<span class="t td cap" id="r3c3" style="left:822px;top:303px">PT,CT</span>
<span class="t td" id="r3c4" style="left:887px;top:303px">067891</span>
<span class="t td cap" id="r3c5" style="left:1015px;top:303px">FPG PET</span>
<span class="t td" id="r3d1" style="left:1142.5px;top:297px">08-23-2017</span>
<span class="t td" id="r3d2" style="left:1142.5px;top:310px">11:39:24</span>
<span class="t td" id="r3im" style="left:1270.5px;top:303px">468</span>
<div class="a" style="left:364px;top:330px;width:1007px;height:1px;background:#cfcfcf"></div>
<!--TABLE-END-->
<!--FOOTER-START-->

<div class="a" id="foot"></div>
<span class="t pg" id="rec" style="left:373px;top:832px;font-size:13px">Record</span>
<span class="t pg" id="rec2" style="left:373px;top:846px;font-size:13px;font-weight:bold;letter-spacing:-0.4px">4 (1 - 4)</span>
<svg class="a" style="left:762px;top:840px" width="13" height="12" viewBox="0 0 13 12"><path d="M6 1 L1.4 6 L6 11 M11.6 1 L7 6 L11.6 11" stroke="#1a6a8a" stroke-width="1.9" fill="none"/></svg>
<span class="t pg" id="prev" style="left:777px;top:839px;font-size:13.4px">Previous</span>
<svg class="a" style="left:835px;top:840px" width="8" height="12" viewBox="0 0 8 12"><path d="M6.6 1 L1.8 6 L6.6 11" stroke="#1a6a8a" stroke-width="1.9" fill="none"/></svg>
<span class="t pg" id="pgn" style="left:849px;top:837.5px;font-size:18px;letter-spacing:-0.3px;-webkit-text-stroke:0.35px #1a6a8a">1 / 1</span>
<svg class="a" style="left:889px;top:840px" width="8" height="12" viewBox="0 0 8 12"><path d="M1.4 1 L6.2 6 L1.4 11" stroke="#1a6a8a" stroke-width="1.9" fill="none"/></svg>
<span class="t pg" id="next" style="left:904px;top:839px;font-size:13.6px">Next</span>
<svg class="a" style="left:937px;top:840px" width="13" height="12" viewBox="0 0 13 12"><path d="M1.4 1 L6 6 L1.4 11 M7 1 L11.6 6 L7 11" stroke="#1a6a8a" stroke-width="1.9" fill="none"/></svg>
<!-- excel -->
<svg class="a" style="left:1191.9px;top:832.4px" width="28" height="26" viewBox="0 0 28 26"><rect x="14" y="2.8" width="12.2" height="20.2" rx="0.6" fill="#fff" stroke="#4caf50" stroke-width="1.1"/><path d="M14 6.2 H26.2 M14 9.6 H26.2 M14 13 H26.2 M14 16.4 H26.2 M14 19.8 H26.2 M19.6 2.8 V23" stroke="#58b45c" stroke-width="1.1"/><path d="M0.6 3.4 L15.6 0.4 V25.4 L0.6 22.6Z" fill="#4caf50"/><path d="M4.8 8.6 L11 17.6 M11 8.6 L4.8 17.6" stroke="#fff" stroke-width="1.3"/></svg>
<div class="a" style="left:1229px;top:834px;width:128px;height:22px;border:1px solid #86d3f3;border-radius:5px;background:#fff"></div>
<span class="t pg" id="filt" style="left:1280px;top:840px;font-size:13px;color:#1c5f7c">Filter</span>
<!--FOOTER-END-->

<div class="a" id="lborder"></div>
<div class="a" id="rborder"></div>
<div class="a" id="bborder"></div>
</body>
</html>
